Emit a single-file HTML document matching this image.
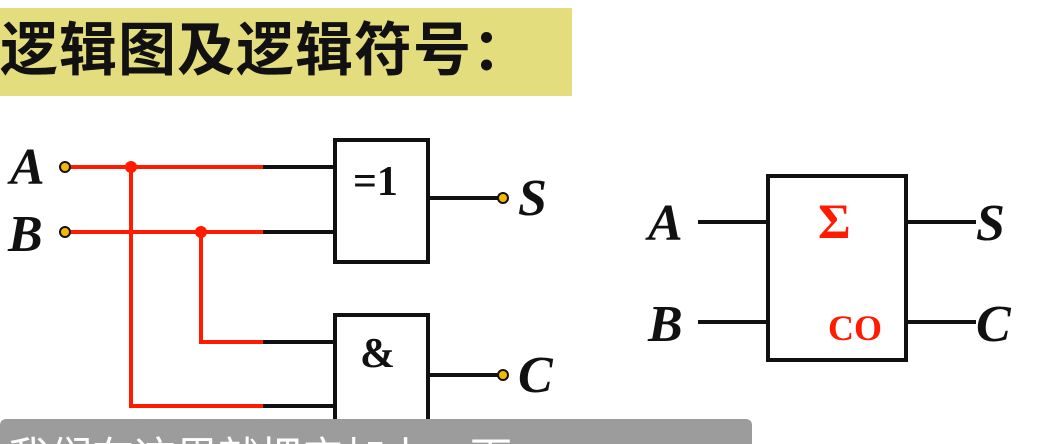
<!DOCTYPE html><html><head><meta charset="utf-8"><style>
html,body{margin:0;width:1037px;height:444px;overflow:hidden}
body{background:#fff;position:relative;font-family:"Liberation Sans","Noto Sans CJK SC",sans-serif}
.t{position:absolute;left:0;top:8px;width:572px;height:88px;background:#e4dd7d}
.t span{position:absolute;left:0;top:10px;font-size:58px;font-weight:bold;letter-spacing:1px;color:#111;white-space:nowrap;line-height:66px}
.sub{position:absolute;left:0;top:419px;width:752px;height:25px;background:#9c9c9c;border-radius:6px 6px 0 0;overflow:hidden}
.sub span{position:absolute;left:8px;top:14px;font-size:42px;line-height:50px;color:#fff;white-space:nowrap}
</style></head><body>
<div class="t"><span>逻辑图及逻辑符号：</span></div>
<svg width="1037" height="444" style="position:absolute;left:0;top:0;overflow:hidden">
<g font-family="Liberation Serif,serif" font-weight="bold" font-style="italic" font-size="52" fill="#111">
<text x="10" y="184">A</text><text x="8" y="251">B</text>
<text x="518" y="215">S</text><text x="518" y="392">C</text>
<text x="648" y="240">A</text><text x="648" y="341">B</text>
<text x="976" y="240">S</text><text x="976" y="341">C</text>
</g>
<g stroke="#ff1a00" stroke-width="4" fill="none">
<polyline points="70,167 263,167"/><polyline points="70,232 263,232"/>
<polyline points="131,167 131,406 263,406"/><polyline points="201,232 201,342 263,342"/>
</g>
<circle cx="131" cy="167" r="6" fill="#ff1a00"/><circle cx="201" cy="232" r="6" fill="#ff1a00"/>
<g stroke="#111" stroke-width="4" fill="none">
<line x1="263" y1="167" x2="335" y2="167"/><line x1="263" y1="232" x2="335" y2="232"/>
<line x1="263" y1="342" x2="335" y2="342"/><line x1="263" y1="406" x2="335" y2="406"/>
<rect x="335" y="140" width="93" height="122"/>
<polyline points="335,440 335,315 428,315 428,440"/>
<line x1="428" y1="198" x2="500" y2="198"/><line x1="428" y1="375" x2="500" y2="375"/>
<rect x="768" y="176" width="138" height="184"/>
<line x1="698" y1="222" x2="768" y2="222"/><line x1="698" y1="322" x2="768" y2="322"/>
<line x1="906" y1="222" x2="976" y2="222"/><line x1="906" y1="322" x2="976" y2="322"/>
</g>
<g fill="#f5b800" stroke="#111" stroke-width="2">
<circle cx="65" cy="167" r="5"/><circle cx="65" cy="232" r="5"/>
<circle cx="503" cy="198" r="5"/><circle cx="503" cy="375" r="5"/>
</g>
<g font-family="Liberation Serif,serif" font-weight="bold" fill="#111">
<text x="353" y="195" font-size="42">=1</text><text x="360" y="367" font-size="42">&amp;</text>
</g>
<g font-family="Liberation Serif,serif" font-weight="bold" fill="#ff1a00">
<text x="818" y="238" font-size="50">Σ</text><text x="828" y="340" font-size="36">CO</text>
</g>
</svg>
<div class="sub"><span>我们在这里就把它加上一下</span></div>
</body></html>
